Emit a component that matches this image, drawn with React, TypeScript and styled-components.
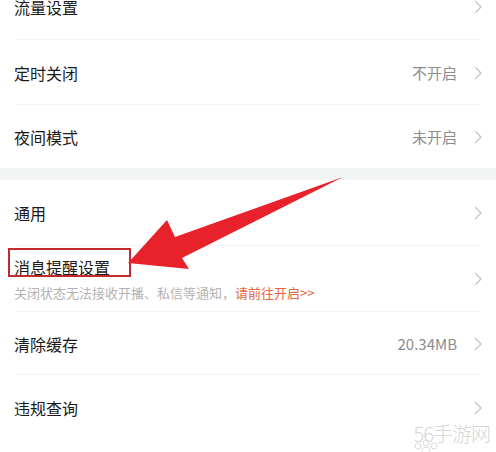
import React from 'react';
import styled, { createGlobalStyle } from 'styled-components';

const GlobalStyle = createGlobalStyle`
  html, body {
    margin: 0;
    padding: 0;
    background: #ffffff;
  }
  body {
    font-family: "Noto Sans CJK SC", "Noto Sans", sans-serif;
    overflow: hidden;
  }
`;

const Page = styled.div`
  position: relative;
  width: 496px;
  height: 452px;
  overflow: hidden;
  background: #ffffff;
`;

const List = styled.div`
  margin-top: -26px;
  display: flex;
  flex-direction: column;
`;

const Row = styled.div<{ h: number; divider?: boolean }>`
  position: relative;
  height: ${({ h }) => h}px;
  display: flex;
  align-items: center;
  padding: 0 13px 0 14px;
  box-sizing: border-box;

  ${({ divider }) =>
    divider &&
    `
    &::after {
      content: '';
      position: absolute;
      left: 15px;
      right: 15px;
      bottom: 0;
      height: 1px;
      background: #f4f4f4;
    }
  `}
`;

const TextBlock = styled.div`
  flex: 1;
  display: flex;
  flex-direction: column;
  gap: 8px;
`;

const Title = styled.span`
  font-size: 16px;
  line-height: 20px;
  color: #1a1a1a;
`;

const Hint = styled.span`
  font-size: 13px;
  line-height: 16px;
  color: #b3b3b3;
  white-space: nowrap;
`;

const HintLink = styled.span`
  color: #e8643c;
`;

const Value = styled.span`
  font-size: 15px;
  color: #8c8c8c;
  margin-right: 16px;
`;

const Band = styled.div`
  height: 12px;
  background: #f3f4f4;
`;

const Overlay = styled.svg`
  position: absolute;
  left: 0;
  top: 0;
  pointer-events: none;
`;

const Watermark = styled.div`
  position: absolute;
  right: 6px;
  bottom: 4px;
  font-size: 20px;
  font-weight: 300;
  letter-spacing: -1px;
  color: #d6d6d6;
`;

const Chevron = () => (
  <svg width="10" height="14" viewBox="0 0 10 14">
    <polyline
      points="2,1 8,7 2,13"
      fill="none"
      stroke="#c6c6c6"
      strokeWidth="1.4"
      strokeLinejoin="round"
    />
  </svg>
);

type Item = {
  title: string;
  value?: string;
  h: number;
  divider?: boolean;
};

const sectionA: Item[] = [
  { title: '流量设置', h: 66, divider: true },
  { title: '定时关闭', value: '不开启', h: 65, divider: true },
  { title: '夜间模式', value: '未开启', h: 63 },
];

const SettingRow: React.FC<{ item: Item }> = ({ item }) => (
  <Row h={item.h} divider={item.divider}>
    <TextBlock>
      <Title>{item.title}</Title>
    </TextBlock>
    {item.value && <Value>{item.value}</Value>}
    <Chevron />
  </Row>
);

const App: React.FC = () => {
  return (
    <>
      <GlobalStyle />
      <Page>
        <List>
          {sectionA.map((it) => (
            <SettingRow key={it.title} item={it} />
          ))}
          <Band />
          <SettingRow item={{ title: '通用', h: 66, divider: true }} />
          <Row h={66} divider>
            <TextBlock>
              <Title>消息提醒设置</Title>
              <Hint>
                关闭状态无法接收开播、私信等通知，
                <HintLink>请前往开启&gt;&gt;</HintLink>
              </Hint>
            </TextBlock>
            <Chevron />
          </Row>
          <SettingRow
            item={{ title: '清除缓存', value: '20.34MB', h: 63, divider: true }}
          />
          <SettingRow item={{ title: '违规查询', h: 66 }} />
        </List>

        <Overlay width="496" height="452" viewBox="0 0 496 452">
          <rect
            x="9"
            y="249"
            width="121"
            height="27"
            fill="none"
            stroke="#c22a30"
            strokeWidth="2"
          />
          <polygon
            points="128,263 167,220 175,237 343,177 182,258 189,269"
            fill="#e8222b"
          />
          <g fill="none" stroke="#dcdcdc" strokeWidth="1">
            <circle cx="418" cy="446" r="3" />
            <circle cx="426" cy="443" r="3" />
            <circle cx="434" cy="446" r="3" />
            <circle cx="426" cy="451" r="4" />
          </g>
        </Overlay>

        <Watermark>56手游网</Watermark>
      </Page>
    </>
  );
};

export default App;
